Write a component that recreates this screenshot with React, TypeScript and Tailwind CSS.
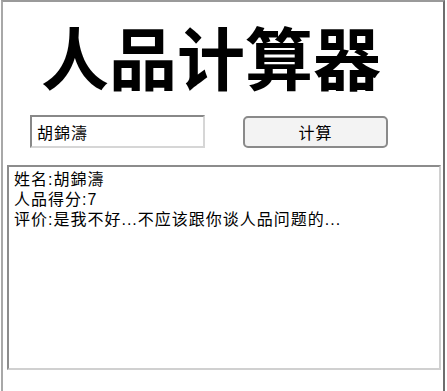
import React from "react";

export default function App() {
  return (
    <div className="w-[447px] h-[391px] bg-white overflow-hidden font-['Noto_Sans_CJK_SC','Noto_Sans',sans-serif]">
      <div className="ml-px w-[444px] h-[391px] border-t-2 border-l-2 border-r-2 border-t-[#9a9a9a] border-l-[#a8a8a8] border-r-[#6e6e6e] bg-white">
        <h1 className="pl-[38px] pt-[20px] text-[68px] leading-[68px] font-bold text-black whitespace-nowrap">
          人品计算器
        </h1>
        <div className="flex items-center mt-[25px] pl-[27px]">
          <input
            readOnly
            defaultValue="胡錦濤"
            className="w-[175px] h-[33px] px-[5px] text-[16px] tracking-[1px] text-black bg-white border-2 border-t-[#888888] border-l-[#888888] border-b-[#d6d6d6] border-r-[#d6d6d6] outline-none font-['Noto_Sans_CJK_SC','Noto_Sans',sans-serif]"
          />
          <button className="ml-[38px] w-[145px] h-[32px] rounded-[5px] border-2 border-[#8a8a8a] bg-[#f3f3f3] text-[16px] tracking-[1px] text-black font-['Noto_Sans_CJK_SC','Noto_Sans',sans-serif]">
            计算
          </button>
        </div>
        <div className="mt-[17px] ml-[4px] w-[434px] h-[205px] border-2 border-t-[#8c8c8c] border-l-[#8c8c8c] border-b-[#d0d0d0] border-r-[#d0d0d0] bg-white px-[5px] pt-[3px] text-[16px] leading-[20px] tracking-[1px] text-black font-['Liberation_Sans','Noto_Sans_CJK_SC',sans-serif]">
          <p>姓名:胡錦濤</p>
          <p>人品得分:7</p>
          <p>评价:是我不好...不应该跟你谈人品问题的...</p>
        </div>
      </div>
    </div>
  );
}
